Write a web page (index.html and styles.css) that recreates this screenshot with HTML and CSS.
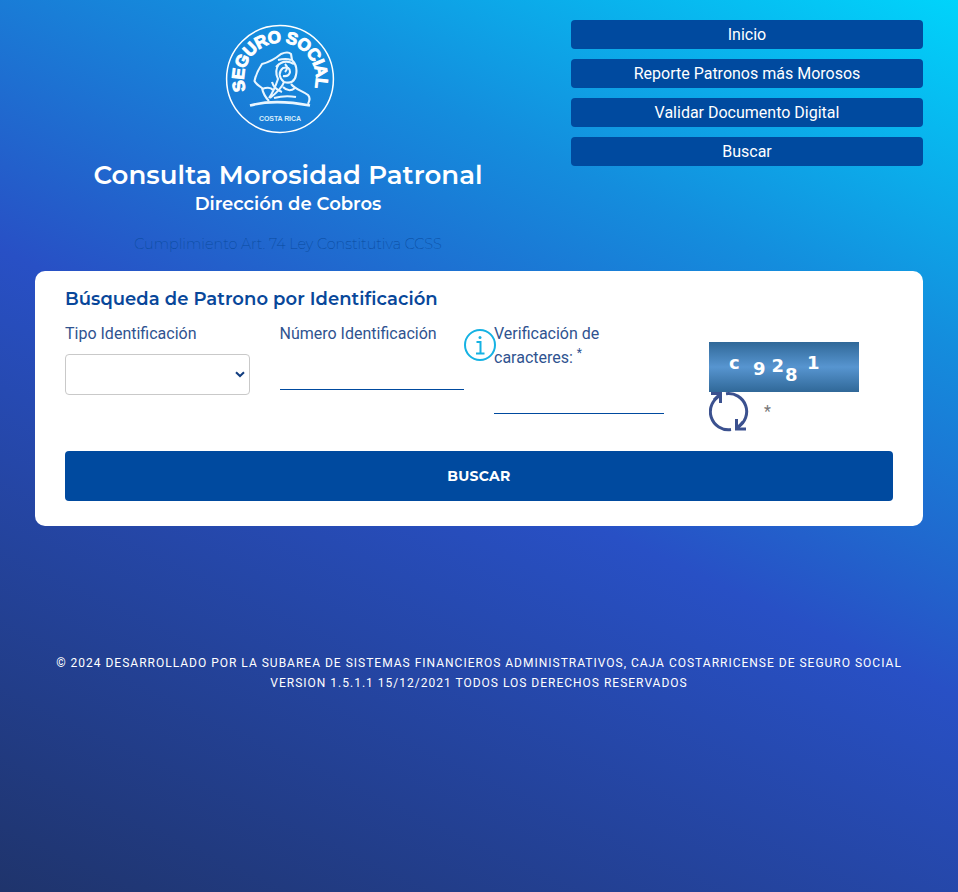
FILE: index.html
```html
<!DOCTYPE html>
<html lang="es">
<head>
<meta charset="utf-8">
<title>Consulta Morosidad Patronal</title>
<link rel="stylesheet" href="styles.css">
</head>
<body>
<div class="page">
  <header class="header">
    <div class="brand">
      <svg class="logo" viewBox="0 0 110 110" role="img" aria-label="Seguro Social Costa Rica">
        <defs><path id="arc" d="M21 66.500 A36 36 0 1 1 89 66.500"/></defs>
        <circle cx="55" cy="55" r="53.4" fill="none" stroke="#fff" stroke-width="1.5"/>
        <text class="logo-arc"><textPath href="#arc" textLength="134">SEGURO SOCIAL</textPath></text>
        <g class="logo-figure">
          <path d="M44 77 C40 73 38 69 37 64 C34 62 31 60 29.500 57 C31 50 33 46 37 40 C45 38 50 35 56 30 Q63 27 66 30 L67 36 Q73 42 71 51 C70 57 66 60 59 58 C54 54 53 48 58 44 Q65 42 65 48 Q64 53 58 52"/>
          <path d="M51 43 Q59 34 69 40 M54 40 Q49 47 53 55 C51 61 49 67 44 74 M59 58 C57 64 50 70 45 74 M66 60 C71 66 78 67 83 71 C86 74 84 78 83 80"/>
          <path d="M37 65 Q45 62 48 66 M47 58 Q49 65 57 68 M60 40 Q64 44 60 48 M58 63 Q64 69 70 64 M49 74 Q60 71 71 73 M53 36 Q61 34 66 36"/>
          <path class="logo-ground" d="M25 81.500 C43 76.500 61 77 85 81.500"/>
        </g>
        <text class="logo-country" x="55" y="96.500" textLength="42">COSTA RICA</text>
      </svg>
      <h1 class="title">Consulta Morosidad Patronal</h1>
      <h2 class="subtitle">Dirección de Cobros</h2>
      <p class="law">Cumplimiento Art. 74 Ley Constitutiva CCSS</p>
    </div>
    <nav class="menu">
      <a class="menu-item">Inicio</a>
      <a class="menu-item">Reporte Patronos más Morosos</a>
      <a class="menu-item">Validar Documento Digital</a>
      <a class="menu-item">Buscar</a>
    </nav>
  </header>

  <main class="card">
    <h3 class="card-title">Búsqueda de Patrono por Identificación</h3>
    <div class="fields">
      <div class="field">
        <label class="label">Tipo Identificación</label>
        <div class="select">
          <svg width="10" height="7" viewBox="0 0 10 7"><path d="M1 1.200 L5 5 L9 1.200" fill="none" stroke="#123e80" stroke-width="2"/></svg>
        </div>
      </div>
      <div class="field field-number">
        <div class="number">
          <label class="label">Número Identificación</label>
          <input class="line-input" type="text">
        </div>
        <svg class="info" width="32" height="32" viewBox="0 0 32 32" fill="none" stroke="#15b2e3">
          <circle cx="16" cy="16" r="15" stroke-width="2"/>
          <path d="M12.500 13 H16.500 V24.500 M12 24.500 H20.500" stroke-width="2"/>
          <circle cx="16" cy="8.500" r="1.500" fill="#15b2e3" stroke="none"/>
        </svg>
      </div>
      <div class="field field-check">
        <label class="label">Verificación de caracteres: <sup>*</sup></label>
        <input class="line-input" type="text">
      </div>
      <div class="field field-captcha">
        <svg class="captcha" width="150" height="50" viewBox="0 0 150 50">
          <defs><linearGradient id="band" x1="0" y1="0" x2="0" y2="1"><stop offset="0" stop-color="#306898"/><stop offset=".5" stop-color="#5795d0"/><stop offset="1" stop-color="#306898"/></linearGradient></defs>
          <rect width="150" height="50" fill="url(#band)"/>
          <text x="20" y="27">c</text><text x="44" y="33">9</text><text x="62.500" y="30">2</text><text x="76" y="39">8</text><text x="98" y="27">1</text>
        </svg>
        <div class="reload-row">
          <svg width="40" height="40" viewBox="0 0 40 40" fill="none" stroke="#3b518f" stroke-width="3">
            <path d="M11.500 3.500 A18 18 0 0 0 22 37.500 M17 1.800 A18 18 0 0 1 29 35"/>
            <path d="M2 1.500 H11.500 V11 M5 8 L11 2 M27.500 27 V37 H37 M28 36.500 L34 30"/>
          </svg>
          <span class="required">*</span>
        </div>
      </div>
    </div>
    <button class="submit" type="button">BUSCAR</button>
  </main>

  <footer class="footer">© 2024 Desarrollado por la Subarea de Sistemas Financieros Administrativos, Caja Costarricense de Seguro Social<br>Version 1.5.1.1 15/12/2021 Todos los derechos reservados</footer>
</div>
</body>
</html>
```
FILE: styles.css
```css
* { box-sizing: border-box; }
body {
  margin: 0;
  color: #2f5390;
  font: 400 16px/24px Roboto, sans-serif;
}
.page {
  min-height: 892px;
  padding: 20px 35px 0;
  background: linear-gradient(25deg, #1f346c 0%, #2850c5 48%, #148ddd 74%, #00d4fb 100%);
}
.header {
  display: flex;
  height: 251px;
}
.brand {
  width: 506px;
  display: flex;
  flex-direction: column;
  align-items: center;
  text-align: center;
}
.logo {
  width: 110px;
  height: 110px;
  margin: 4px 17px 0 0;
}
.logo-arc {
  font: 700 17px "Liberation Sans", sans-serif;
  fill: #fff;
  stroke: #fff;
  stroke-width: 1;
}
.logo-figure { fill: none; stroke: #e9f6ff; stroke-width: 2.1; stroke-linejoin: round; }
.logo-ground { stroke-width: 2.6; }
.logo-country { font: 700 7px "Liberation Sans", sans-serif; fill: #d7edfb; text-anchor: middle; }
.title, .subtitle, .law, .card-title, .submit { font-family: Montserrat, Inter, sans-serif; }
.title {
  margin: 26px 0 0;
  color: #fff;
  font-size: 26px;
  font-weight: 600;
  line-height: 31px;
  white-space: nowrap;
  letter-spacing: .07px;
}
.subtitle {
  margin: 2px 0 0;
  color: #fff;
  font-size: 18px;
  font-weight: 600;
  line-height: 22px;
}
.law {
  margin: 17px 0 0;
  color: #0a4b9e;
  font-size: 14.4px;
  font-weight: 200;
  line-height: 24px;
}
.menu {
  width: 352px;
  margin-left: auto;
  display: flex;
  flex-direction: column;
  gap: 10px;
}
.menu-item {
  height: 29px;
  border-radius: 4px;
  background: #004a9f;
  color: #fff;
  line-height: 29px;
  text-align: center;
}
.card {
  height: 255px;
  padding: 16px 30px 25px;
  border-radius: 10px;
  background: #fff;
}
.card-title {
  margin: 0;
  color: #08479a;
  font-size: 18px;
  font-weight: 600;
  line-height: 24px;
  letter-spacing: .05px;
}
.fields {
  display: grid;
  grid-template-columns: 184.5px 246.5px 168px 1fr;
  height: 140px;
  padding-top: 11px;
}
.field-number { padding-left: 30px; display: flex; }
.number { width: 184.5px; flex: none; }
.field-check { margin-left: -2px; }
.field-captcha { margin-left: 45px; padding-top: 20px; }
.label { display: block; }
.label sup { font-size: 12px; line-height: 0; }
.select {
  height: 41px;
  margin-top: 8px;
  padding-right: 4px;
  border: 1px solid #c9c9c9;
  border-radius: 4px;
  display: flex;
  align-items: center;
  justify-content: flex-end;
}
.line-input {
  display: block;
  width: 100%;
  height: 36px;
  margin-top: 8px;
  padding: 0;
  border: 0;
  border-bottom: 1px solid #004a9f;
  background: transparent;
  outline: 0;
}
.info { flex: none; margin-top: 7px; }
.captcha { display: block; }
.captcha text { font: 700 18px "DejaVu Sans", sans-serif; fill: #fff; }
.reload-row { display: flex; align-items: center; gap: 15px; }
.required { color: #777; }
.submit {
  display: block;
  width: 100%;
  height: 50px;
  border: 0;
  border-radius: 4px;
  background: #004a9f;
  color: #fff;
  font-size: 14px;
  font-weight: 700;
  letter-spacing: .3px;
}
.footer {
  margin-top: 127px;
  color: #fff;
  font-size: 12px;
  font-weight: 400;
  line-height: 20px;
  letter-spacing: 1px;
  text-align: center;
  text-transform: uppercase;
}
```
